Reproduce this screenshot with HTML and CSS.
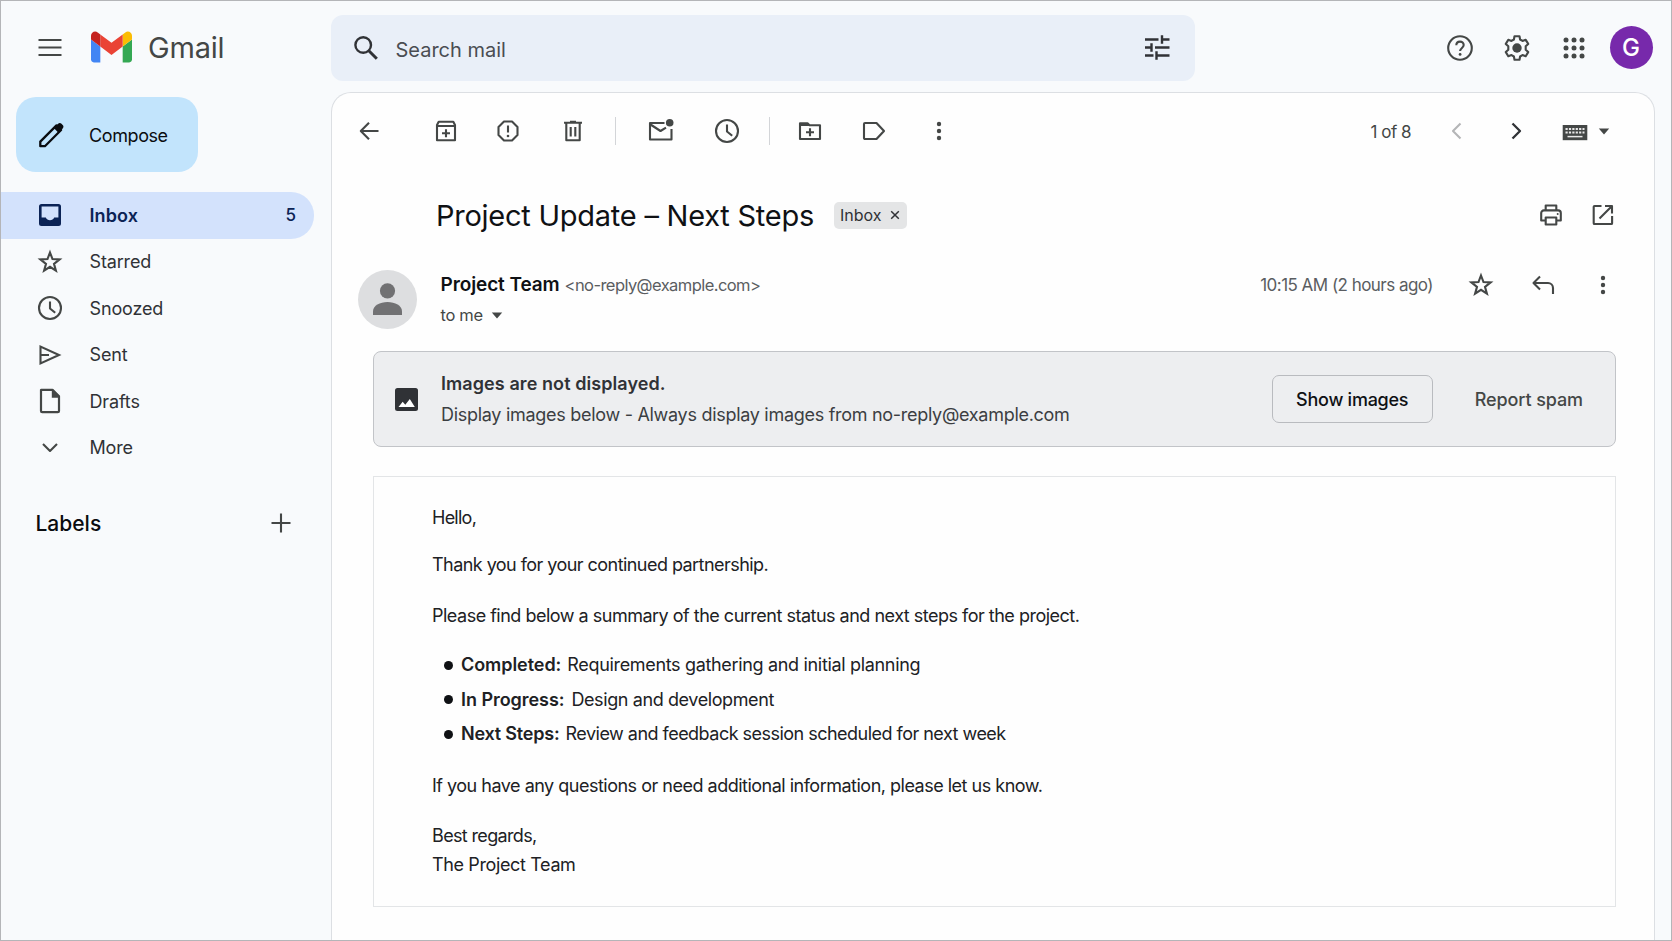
FILE: index.html
```html
<!DOCTYPE html>
<html lang="en">
<head>
  <meta charset="UTF-8">
  <meta name="viewport" content="width=device-width, initial-scale=1.0">
  <title>Project Update – Next Steps - Gmail</title>
  <link rel="stylesheet" href="styles.css">
</head>
<body>
  <div class="app">
    <header class="header">
      <div class="brand">
        <svg class="icon" viewBox="0 0 28 28"><path d="M2.500 6h23M2.500 13.500h23M2.500 21h23"/></svg>
        <svg class="logo" viewBox="52 42 88 66">
          <path fill="#4285f4" d="M58 108h14V74L52 59v43c0 3.320 2.690 6 6 6"/>
          <path fill="#34a853" d="M120 108h14c3.320 0 6-2.690 6-6V59l-20 15"/>
          <path fill="#fbbc04" d="M120 48v26l20-15v-8c0-7.420-8.470-11.650-14.400-7.200"/>
          <path fill="#ea4335" d="M72 74V48l24 18 24-18v26L96 92"/>
          <path fill="#c5221f" d="M52 51v8l20 15V48l-5.600-4.200c-5.940-4.450-14.400-.22-14.400 7.200"/>
        </svg>
        <span class="brand-name">Gmail</span>
      </div>
      <div class="search">
        <svg class="icon dark" viewBox="0 0 28 28"><circle cx="11.200" cy="11" r="7.800" stroke-width="2.400"/><path d="M16.800 16.800l8 8" stroke-width="3"/></svg>
        <span class="search-text">Search mail</span>
        <svg class="icon dark" viewBox="0 0 28 28"><path stroke-width="2.400" d="M2 5.500h13.500M19 1.300v8.400M19 5.500h7.500M2 13.500h6.500M8.500 9.300v8.400M12 13.500h14.500M2 21.500h8.500M13.500 17.300v8.400M13.500 21.500h13"/></svg>
      </div>
      <div class="account">
        <svg class="icon" viewBox="0 0 28 28"><circle cx="14" cy="14" r="11.800"/><path d="M10.300 11.300c0-2.200 1.600-3.700 3.700-3.700s3.700 1.500 3.700 3.500c0 2.800-3.600 3-3.600 6"/><circle class="fill" cx="14.100" cy="20.400" r="1.400"/></svg>
        <svg class="icon gear" viewBox="0 0 28 28"><path d="M11.500 2.200h5l.6 3.300 2.400 1.400 3.200-1.200 2.500 4.200-2.500 2.300v3.600l2.500 2.300-2.500 4.200-3.200-1.200-2.400 1.400-.6 3.300h-5l-.6-3.300-2.400-1.400-3.200 1.200-2.500-4.200 2.500-2.300v-3.600L2.800 9.900l2.500-4.200 3.200 1.200 2.400-1.400z"/><circle class="fill" cx="14" cy="14" r="4.700"/></svg>
        <svg class="icon apps" viewBox="0 0 28 28"><g class="fill"><circle cx="6" cy="6" r="2.500"/><circle cx="14" cy="6" r="2.500"/><circle cx="22" cy="6" r="2.500"/><circle cx="6" cy="14" r="2.500"/><circle cx="14" cy="14" r="2.500"/><circle cx="22" cy="14" r="2.500"/><circle cx="6" cy="22" r="2.500"/><circle cx="14" cy="22" r="2.500"/><circle cx="22" cy="22" r="2.500"/></g></svg>
        <span class="avatar">G</span>
      </div>
    </header>

    <aside class="sidebar">
      <button class="compose">
        <svg class="icon black" viewBox="0 0 28 28"><path stroke-width="2.300" d="M3.300 25.200v-4.600L19.500 4.400l4.600 4.600L7.900 25.200z"/><path class="fill" d="M16.800 7.100l4.300-4.300c1-1 2.400-1 3.400 0l1.200 1.200c1 1 1 2.400 0 3.400l-4.300 4.300z"/></svg>
        <span>Compose</span>
      </button>
      <nav class="nav">
        <a class="nav-item active">
          <svg class="icon" viewBox="0 0 28 28"><path class="fill" fill-rule="evenodd" d="M5.500 3h17A2.500 2.500 0 0 1 25 5.500v17a2.500 2.500 0 0 1-2.500 2.500h-17A2.500 2.500 0 0 1 3 22.500v-17A2.500 2.500 0 0 1 5.500 3zM5.600 5.600v10.900h4.200c.8 1.700 2.300 2.800 4.200 2.800s3.400-1.100 4.200-2.800h4.200V5.600z"/></svg>
          <span>Inbox</span>
          <span class="count">5</span>
        </a>
        <a class="nav-item">
          <svg class="icon sharp" viewBox="0 0 28 28"><path d="M14 4.500l2.500 6.600 7.100.3-5.600 4.400 1.900 6.900-5.900-3.900-5.900 3.900L10 15.800l-5.600-4.400 7.100-.3z"/></svg>
          <span>Starred</span>
        </a>
        <a class="nav-item">
          <svg class="icon" viewBox="0 0 28 28"><circle cx="14" cy="14" r="11"/><path d="M14 7.500v7l5.200 4.200"/></svg>
          <span>Snoozed</span>
        </a>
        <a class="nav-item">
          <svg class="icon sharp" viewBox="0 0 28 28"><path d="M4.500 5.600v16.800L23 14zM4.500 14h8.500"/></svg>
          <span>Sent</span>
        </a>
        <a class="nav-item">
          <svg class="icon" viewBox="0 0 28 28"><path stroke-width="2.200" d="M5.200 2.800h11.300l6.500 6.500V24a1.200 1.200 0 0 1-1.200 1.200H6.200A1.200 1.200 0 0 1 5 24V3z"/><path class="fill" d="M15.800 2.800h1.500l6.500 6.500v1.400h-8z"/></svg>
          <span>Drafts</span>
        </a>
        <a class="nav-item">
          <svg class="icon" viewBox="0 0 28 28"><path d="M7 10l7 7 7-7"/></svg>
          <span>More</span>
        </a>
      </nav>
      <div class="labels">
        <span>Labels</span>
        <svg class="icon" viewBox="0 0 28 28"><path d="M14 4.500v19M4.500 14h19"/></svg>
      </div>
    </aside>

    <main class="card">
      <div class="toolbar">
        <svg class="icon back" viewBox="0 0 28 28"><path d="M23.500 14H6M14 5.800L5.800 14l8.200 8.200"/></svg>
        <svg class="icon archive" viewBox="0 0 28 28"><path d="M5 8l1.700-3.200h14.600L23 8v15.300H5zM5 9h18M14 12.300v8M10 16.300h8"/></svg>
        <svg class="icon spam" viewBox="0 0 28 28"><path d="M10 4.500h8l5.500 5.500v8L18 23.500h-8L4.500 18v-8zM14 8.500v7"/><circle class="fill" cx="14" cy="19" r="1.300"/></svg>
        <svg class="icon trash" viewBox="0 0 28 28"><path d="M5 5.800h18M7.300 6v17.300h13.400V6M11.700 10v9.500M16.300 10v9.500M11 4.800h6"/></svg>
        <span class="divider"></span>
        <svg class="icon unread" viewBox="0 0 28 28"><path d="M17.500 6H3v16.500h21.500V12M3.500 7.500l10 6.500 5.500-3.400"/><circle class="fill" cx="22.700" cy="5.800" r="3.800"/></svg>
        <svg class="icon snooze" viewBox="0 0 28 28"><circle cx="14" cy="14" r="11"/><path d="M14 7.500v7l5.200 4.200"/></svg>
        <span class="divider"></span>
        <svg class="icon move" viewBox="0 0 28 28"><path d="M4 6.300h7.500l2 2H24V22H4zM14 11.200v8M10 15.200h8"/><path class="fill" d="M4 6h7l2.500 3H4z"/></svg>
        <svg class="icon tag" viewBox="0 0 28 28"><path d="M5 6h11.500L24 14l-7.500 8H5a1 1 0 0 1-1-1V7a1 1 0 0 1 1-1z"/></svg>
        <svg class="icon more" viewBox="0 0 28 28"><g class="fill"><circle cx="14" cy="7" r="2.200"/><circle cx="14" cy="14" r="2.200"/><circle cx="14" cy="21" r="2.200"/></g></svg>
        <div class="pager">
          <span class="page">1 of 8</span>
          <svg class="icon muted prev" viewBox="0 0 28 28"><path d="M17.500 6.500L10 14l7.500 7.500"/></svg>
          <svg class="icon dark next" viewBox="0 0 28 28"><path stroke-width="2.300" d="M10.500 6.500L18 14l-7.500 7.500"/></svg>
          <svg class="icon keyboard" viewBox="0 0 28 28"><path class="fill" d="M1.700 8h24.600v15.200H1.700z"/><path class="keys" d="M4.500 12h19M4.500 15.500h19"/><path class="space" d="M6.500 19.600h15"/></svg>
          <svg class="caret" viewBox="0 0 12 7"><path d="M.8.500h10.400L6 6.600z"/></svg>
        </div>
      </div>

      <div class="subject-row">
        <h1 class="subject">Project Update – Next Steps</h1>
        <span class="chip">Inbox <svg viewBox="0 0 10 10"><path d="M1.200 1.200l7.600 7.600M8.800 1.200L1.200 8.800"/></svg></span>
        <svg class="icon print" viewBox="0 0 28 28"><path d="M8.700 9V4.500h10.600V9M8.700 19.500H4.200V12a2.600 2.600 0 0 1 2.600-2.600h14.400a2.600 2.600 0 0 1 2.600 2.600v7.500h-4.500M8.700 16.500h10.600v7H8.700z"/><circle class="fill" cx="20.700" cy="13" r="1"/></svg>
        <svg class="icon open" viewBox="0 0 28 28"><path d="M12.500 5h-7a.8.800 0 0 0-.8.800v16.400c0 .5.300.8.800.8h16.800c.5 0 .8-.3.800-.8V15M10.500 17.500L22.500 5.500M16 5h7v7.500"/></svg>
      </div>

      <div class="sender-row">
        <svg class="person" viewBox="0 0 59 59"><circle cx="29.500" cy="29.500" r="29.500" fill="#dddee0"/><circle cx="29.500" cy="20.800" r="7.600" fill="#717173"/><path fill="#717173" d="M15 45v-3.500c0-6 7-9.500 14.500-9.500S44 35.500 44 41.500V45z"/></svg>
        <div class="sender">
          <div class="from"><b>Project Team</b> <span class="email">&lt;no-reply@example.com&gt;</span></div>
          <div class="to">to me <svg class="caret" viewBox="0 0 12 7"><path d="M.8.500h10.400L6 6.600z"/></svg></div>
        </div>
        <div class="meta">
          <span class="time">10:15 AM (2 hours ago)</span>
          <svg class="icon sharp star" viewBox="0 0 28 28"><path d="M14 4.500l2.500 6.600 7.100.3-5.600 4.400 1.900 6.900-5.900-3.900-5.900 3.900L10 15.800l-5.600-4.400 7.100-.3z"/></svg>
          <svg class="icon reply" viewBox="0 0 28 28"><path d="M24 23v-6a5 5 0 0 0-5-5H4.500M11 5.500L4.500 12l6.500 6.500"/></svg>
          <svg class="icon more" viewBox="0 0 28 28"><g class="fill"><circle cx="14" cy="7" r="2.200"/><circle cx="14" cy="14" r="2.200"/><circle cx="14" cy="21" r="2.200"/></g></svg>
        </div>
      </div>

      <div class="banner">
        <svg class="picture" viewBox="0 0 23 23"><rect width="23" height="23" rx="2.500" fill="#303236"/><path fill="#fff" d="M3.500 19l4.200-5.200 2.600 3L14.800 11l5 8z"/></svg>
        <div class="banner-text">
          <div class="banner-title">Images are not displayed.</div>
          <div class="banner-sub">Display images below - Always display images from no-reply@example.com</div>
        </div>
        <button class="show-images">Show images</button>
        <button class="report">Report spam</button>
      </div>

      <article class="mail">
        <p class="hello">Hello,</p>
        <p class="thanks">Thank you for your continued partnership.</p>
        <p class="intro">Please find below a summary of the current status and next steps for the project.</p>
        <ul>
          <li class="done"><b>Completed:</b><span>Requirements gathering and initial planning</span></li>
          <li class="doing"><b>In Progress:</b><span>Design and development</span></li>
          <li class="upcoming"><b>Next Steps:</b><span>Review and feedback session scheduled for next week</span></li>
        </ul>
        <p class="questions">If you have any questions or need additional information, please let us know.</p>
        <p class="regards">Best regards,</p>
        <p class="team">The Project Team</p>
      </article>
    </main>
  </div>
</body>
</html>
```
FILE: styles.css
```css
* {
  box-sizing: border-box;
}
body {
  margin: 0;
  font-family: Inter, Roboto, sans-serif;
  font-size: 18px;
  color: #202124;
  background-color: #f8fafc;
}
button {
  font-family: inherit;
  border: none;
  background: none;
  padding: 0;
  cursor: pointer;
}
.app {
  display: grid;
  grid-template-columns: 330px 1fr;
  grid-template-rows: 91px 1fr;
  height: 100vh;
  border: 1px solid #b4b5b8;
  overflow: hidden;
}

/* icons */
.icon {
  width: 28px;
  height: 28px;
  flex: none;
  fill: none;
  stroke: #444746;
  stroke-width: 2.1;
  stroke-linejoin: round;
}
.icon.sharp {
  stroke-linejoin: miter;
}
.icon .fill {
  fill: #444746;
  stroke: none;
}
.icon.dark {
  stroke: #303236;
}
.icon.black {
  stroke: #0a0c10;
}
.icon.black .fill {
  fill: #0a0c10;
}
.icon.muted {
  stroke: #b4b5b7;
}
.caret {
  width: 12px;
  height: 7px;
  fill: #444746;
}

/* header */
.header {
  grid-column: 1 / 3;
  display: flex;
  align-items: center;
  padding-top: 2px;
}
.brand {
  display: flex;
  align-items: center;
  width: 330px;
  padding-left: 35px;
}
.logo {
  width: 41px;
  height: 32px;
  margin: 0 0 2px 27px;
}
.brand-name {
  margin-left: 16px;
  font-size: 29px;
  letter-spacing: -0.2px;
  color: #444746;
}
.search {
  display: flex;
  align-items: center;
  width: 864px;
  height: 66px;
  padding: 0 24px 0 20.5px;
  border-radius: 12px;
  background-color: #e9eff8;
}
.search-text {
  flex: 1;
  margin-left: 16px;
  padding-top: 4px;
  font-size: 20px;
  color: #4a4d52;
}
.account {
  display: flex;
  align-items: center;
  margin-left: auto;
  padding-right: 18.5px;
}
.gear {
  margin-left: 29px;
}
.apps {
  margin-left: 28.5px;
}
.avatar {
  width: 43px;
  height: 43px;
  margin-left: 22px;
  border-radius: 50%;
  background-color: #7729ab;
  color: white;
  font-size: 24px;
  font-weight: 500;
  line-height: 43px;
  text-align: center;
}

/* sidebar */
.sidebar {
  padding-top: 5px;
}
.compose {
  display: flex;
  align-items: center;
  width: 182px;
  height: 75px;
  margin-left: 15px;
  padding-left: 21px;
  border-radius: 20px;
  background-color: #c2e4fc;
  font-size: 18px;
  letter-spacing: -0.4px;
  color: #0a0c10;
}
.compose span {
  margin-left: 24px;
  padding-top: 1px;
}
.nav {
  margin-top: 20px;
}
.nav-item {
  display: flex;
  align-items: center;
  width: 313px;
  height: 46.5px;
  padding: 0 18px 0 35px;
  border-radius: 0 23px 23px 0;
  letter-spacing: -0.15px;
  color: #303236;
}
.nav-item span {
  margin-left: 25.5px;
}
.nav-item.active {
  background-color: #d3e2fc;
  color: #0b2355;
  font-weight: 600;
  letter-spacing: 0.1px;
}
.active .icon .fill {
  fill: #0b2355;
}
.nav-item .count {
  margin-left: auto;
  font-size: 17px;
  font-weight: 500;
}
.labels {
  display: flex;
  align-items: center;
  justify-content: space-between;
  width: 294px;
  margin-top: 38px;
  padding-left: 34.5px;
  font-size: 21px;
  font-weight: 500;
  color: #0a0c10;
}

/* message card */
.card {
  width: 1324px;
  border: 1px solid #dcdfe3;
  border-bottom: none;
  border-radius: 20px 20px 0 0;
  background-color: #fefefe;
}
.toolbar {
  display: flex;
  align-items: center;
  height: 76px;
  padding-left: 23px;
}
.archive {
  margin-left: 49px;
}
.spam {
  margin-left: 34px;
}
.trash {
  margin-left: 37px;
}
.divider {
  width: 1px;
  height: 28px;
  margin-left: 28px;
  background-color: #d3d5d8;
}
.unread {
  margin-left: 31px;
}
.snooze {
  margin-left: 38px;
}
.move {
  margin-left: 26px;
}
.tag {
  margin-left: 36px;
}
.toolbar .more {
  margin-left: 37px;
}
.pager {
  display: flex;
  align-items: center;
  margin-left: auto;
  padding-right: 44px;
  font-size: 17px;
  color: #444746;
}
.page {
  letter-spacing: -0.5px;
  padding-top: 1px;
}
.prev {
  margin-left: 32px;
}
.next {
  margin-left: 31px;
}
.keyboard {
  margin-left: 31px;
}
.keyboard .keys {
  stroke: #e8e8e8;
  stroke-dasharray: 2.2 1.2;
}
.keyboard .space {
  stroke: #e8e8e8;
  stroke-width: 1.5;
}
.pager .caret {
  margin-left: 9px;
}
.subject-row {
  display: flex;
  align-items: center;
  height: 92px;
  padding: 0 37px 0 104px;
}
.subject {
  margin: 0;
  font-size: 29px;
  font-weight: 400;
  letter-spacing: -0.25px;
  color: #0f1114;
  white-space: nowrap;
}
.chip {
  display: flex;
  align-items: center;
  height: 27px;
  margin-left: 20px;
  padding: 0 7px 0 6px;
  border-radius: 5px;
  background-color: #e4e5e6;
  font-size: 16px;
  color: #303236;
}
.chip svg {
  width: 10px;
  height: 10px;
  margin-left: 9px;
  fill: none;
  stroke: #303236;
  stroke-width: 1.5;
}
.print {
  margin-left: auto;
}
.open {
  margin-left: 24px;
}
.sender-row {
  display: flex;
  height: 60px;
  margin-top: 9px;
  padding-left: 26px;
}
.person {
  width: 59px;
  height: 59px;
  flex: none;
}
.sender {
  margin-left: 23.5px;
}
.from {
  height: 28px;
  line-height: 29px;
  color: #5a5d61;
}
.from b {
  font-size: 19px;
  font-weight: 600;
  letter-spacing: -0.1px;
  color: #0f1114;
}
.email {
  font-size: 16.5px;
  letter-spacing: -0.57px;
}
.to {
  display: flex;
  align-items: center;
  height: 34px;
  font-size: 16.5px;
  letter-spacing: -0.3px;
  color: #444746;
}
.to .caret {
  margin-left: 8px;
}
.meta {
  display: flex;
  align-items: center;
  height: 29px;
  margin-left: auto;
  padding-right: 37px;
}
.time {
  font-size: 17px;
  letter-spacing: -0.53px;
  color: #5a5d61;
}
.star {
  margin-left: 34px;
}
.reply {
  margin-left: 34px;
}
.meta .more {
  margin-left: 32px;
}

/* blocked images banner */
.banner {
  display: flex;
  align-items: center;
  width: 1243px;
  height: 96px;
  margin: 21px 0 0 41px;
  padding: 0 32px 0 21px;
  border: 1px solid #c2c4c8;
  border-radius: 8px;
  background-color: #edeef0;
}
.picture {
  width: 23px;
  height: 23px;
}
.banner-text {
  margin-left: 23px;
  line-height: 31px;
  white-space: nowrap;
}
.banner-title {
  font-weight: 600;
  letter-spacing: 0.08px;
  color: #303236;
}
.banner-sub {
  letter-spacing: -0.29px;
  color: #3c3e42;
}
.show-images {
  width: 161px;
  height: 48px;
  margin-left: auto;
  border: 1px solid #b9bbbf;
  border-radius: 7px;
  font-size: 18px;
  font-weight: 500;
  letter-spacing: -0.25px;
  color: #0f1114;
}
.report {
  margin-left: 42px;
  font-size: 18px;
  font-weight: 500;
  letter-spacing: -0.1px;
  color: #444746;
}

/* message text */
.mail {
  width: 1243px;
  height: 431px;
  margin: 29px 0 0 41px;
  padding: 27px 58px;
  border: 1px solid #e3e5e7;
  line-height: 28px;
  letter-spacing: -0.5px;
}
.mail p {
  margin: 0;
}
.mail .hello {
  letter-spacing: -0.75px;
}
.mail .thanks {
  margin-top: 19px;
  letter-spacing: -0.55px;
}
.mail .intro {
  margin-top: 23px;
}
.mail ul {
  margin: 18px 0 20px;
  padding: 0;
  list-style: none;
}
.mail li {
  display: flex;
  align-items: center;
  height: 34.5px;
  padding-left: 11.5px;
}
.mail li::before {
  content: "";
  width: 9px;
  height: 9px;
  margin-right: 8.5px;
  border-radius: 50%;
  background-color: #0f1114;
}
.mail li b {
  font-weight: 600;
  letter-spacing: -0.05px;
  margin-right: 6px;
}
.mail .done span {
  letter-spacing: -0.33px;
}
.mail .doing b {
  margin-right: 7px;
}
.mail .doing span {
  letter-spacing: -0.4px;
}
.mail .upcoming b {
  letter-spacing: -0.2px;
}
.mail .upcoming span {
  letter-spacing: -0.52px;
}
.mail .regards {
  margin-top: 21px;
  line-height: 29.5px;
  letter-spacing: -0.65px;
}
.mail .team {
  line-height: 29.5px;
  letter-spacing: -0.37px;
}
```
